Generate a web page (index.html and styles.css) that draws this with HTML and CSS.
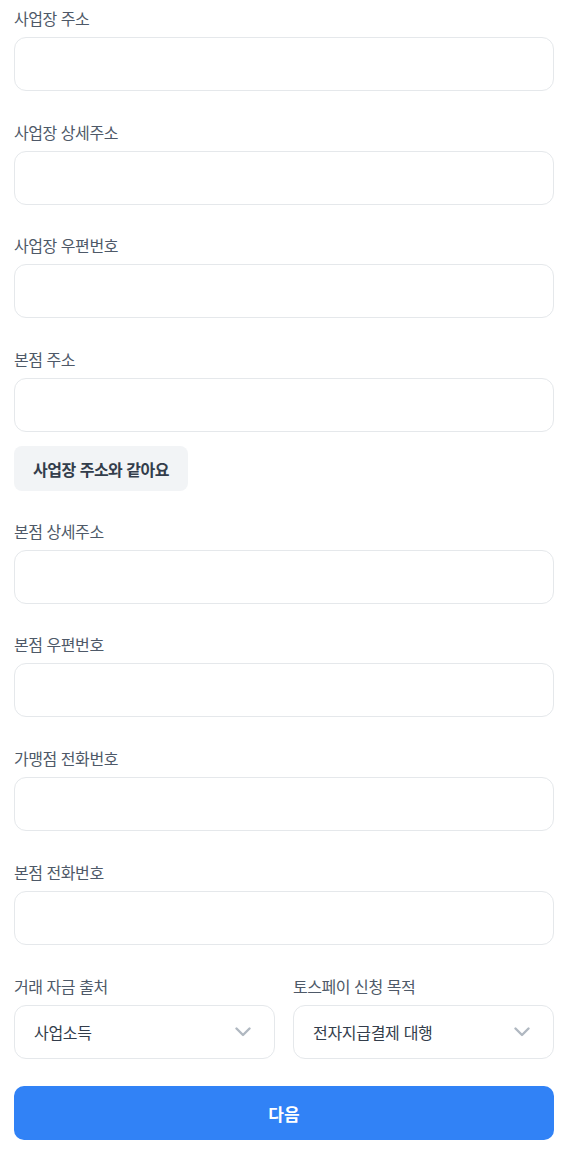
FILE: index.html
```html
<!DOCTYPE html>
<html lang="ko">
<head>
<meta charset="utf-8">
<link rel="stylesheet" href="styles.css">
</head>
<body>
<main class="form">
  <div class="field">
    <label class="label">사업장 주소</label>
    <div class="input"></div>
  </div>
  <div class="field">
    <label class="label">사업장 상세주소</label>
    <div class="input"></div>
  </div>
  <div class="field">
    <label class="label">사업장 우편번호</label>
    <div class="input"></div>
  </div>
  <div class="field">
    <label class="label">본점 주소</label>
    <div class="input"></div>
    <button class="same-btn">사업장 주소와 같아요</button>
  </div>
  <div class="field">
    <label class="label">본점 상세주소</label>
    <div class="input"></div>
  </div>
  <div class="field">
    <label class="label">본점 우편번호</label>
    <div class="input"></div>
  </div>
  <div class="field">
    <label class="label">가맹점 전화번호</label>
    <div class="input"></div>
  </div>
  <div class="field">
    <label class="label">본점 전화번호</label>
    <div class="input"></div>
  </div>
  <div class="row">
    <div class="field">
      <label class="label">거래 자금 출처</label>
      <div class="input select"><span>사업소득</span>
        <svg class="chev" width="16" height="10" viewBox="0 0 16 10"><path d="M1.5 1.5 L8 8 L14.5 1.5" fill="none" stroke="#b0b8c1" stroke-width="2.4" stroke-linecap="round" stroke-linejoin="round"/></svg>
      </div>
    </div>
    <div class="field">
      <label class="label">토스페이 신청 목적</label>
      <div class="input select"><span>전자지급결제 대행</span>
        <svg class="chev" width="16" height="10" viewBox="0 0 16 10"><path d="M1.5 1.5 L8 8 L14.5 1.5" fill="none" stroke="#b0b8c1" stroke-width="2.4" stroke-linecap="round" stroke-linejoin="round"/></svg>
      </div>
    </div>
  </div>
  <button class="next-btn">다음</button>
</main>
</body>
</html>
```
FILE: styles.css
```css
* { box-sizing: border-box; }
html, body { margin: 0; padding: 0; background: #ffffff; }
body {
  font-family: "Noto Sans CJK KR", "Noto Sans", sans-serif;
  color: #333d4b;
}
.form {
  padding: 7px 24px 19px 14px;
  display: flex;
  flex-direction: column;
  gap: 29.7px;
}
.field {
  display: flex;
  flex-direction: column;
}
.label {
  font-size: 16px;
  line-height: 22px;
  color: #4e5968;
  letter-spacing: -0.45px;
  margin-bottom: 8px;
}
.input {
  height: 54px;
  border: 1px solid #e5e8eb;
  border-radius: 12px;
  background: #fff;
}
.same-btn {
  align-self: flex-start;
  margin-top: 14px;
  height: 45px;
  width: 174px;
  border: none;
  border-radius: 8px;
  background: #f2f4f6;
  color: #333d4b;
  font-family: inherit;
  font-size: 16px;
  font-weight: 700;
  letter-spacing: -0.5px;
  padding: 0;
  margin-bottom: -1px;
}
.row {
  display: grid;
  grid-template-columns: 1fr 1fr;
  gap: 18px;
}
.select {
  display: flex;
  align-items: center;
  justify-content: space-between;
  padding: 0 23px 0 19px;
  font-size: 16px;
  color: #333d4b;
  letter-spacing: -0.3px;
}
.chev { display: block; }
.next-btn {
  margin-top: -2px;
  height: 54px;
  border: none;
  border-radius: 10px;
  background: #3182f6;
  color: #fff;
  font-family: inherit;
  font-size: 17px;
  font-weight: 700;
}
```
